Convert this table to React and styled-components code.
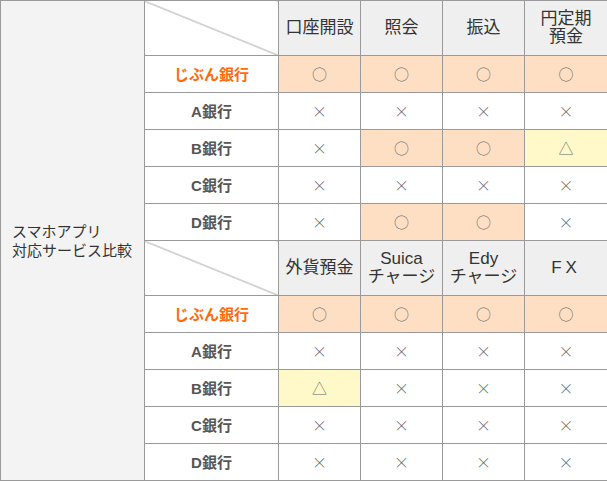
import React from "react";
import styled, { createGlobalStyle } from "styled-components";

const Global = createGlobalStyle`
  body {
    margin: 0;
    background: #fff;
    font-family: "Liberation Sans", "Noto Sans CJK JP", sans-serif;
  }
`;

const Table = styled.table`
  border-collapse: collapse;
  table-layout: fixed;
  width: 607px;
  color: #333;
`;

const Col = styled.col`
  width: ${(p) => p.$w}px;
`;

const Cell = styled.td`
  border: 1px solid #9a9a9a;
  padding: 0;
  text-align: center;
  vertical-align: middle;
`;

const Title = styled(Cell)`
  background: #f3f3f3;
  text-align: left;
  padding-left: 11px;
  font-size: 15px;
  line-height: 19px;
  color: #333;
`;

const Corner = styled(Cell)`
  height: 54px;
  background: linear-gradient(
    to top right,
    transparent calc(50% - 0.8px),
    #9a9a9a 50%,
    transparent calc(50% + 0.8px)
  );
`;

const Head = styled(Cell)`
  background: #efefef;
  font-size: 17px;
  line-height: 18px;
  color: #333;
  letter-spacing: ${(p) => (p.$wide ? "4px" : "0")};
`;

const Bank = styled(Cell)`
  height: 34px;
  font-size: 15px;
  font-weight: bold;
  padding-bottom: 2px;
  color: ${(p) => (p.$own ? "#ff6a0d" : "#555")};
`;

const Mark = styled(Cell)`
  font-family: "Noto Sans CJK JP", sans-serif;
  font-size: 15px;
  font-weight: 300;
  color: #666;
  padding-bottom: 2px;
  background: ${(p) =>
    p.$tone === "o" ? "#fedfc3" : p.$tone === "y" ? "#fff9c9" : "#fff"};
`;

const widths = [144, 134, 82, 82, 82, 83];

const sections = [
  {
    heads: [["口座開設"], ["照会"], ["振込"], ["円定期", "預金"]],
    rows: [
      ["じぶん銀行", "oooo"],
      ["A銀行", "xxxx"],
      ["B銀行", "xoot"],
      ["C銀行", "xxxx"],
      ["D銀行", "xoox"],
    ],
  },
  {
    heads: [["外貨預金"], ["Suica", "チャージ"], ["Edy", "チャージ"], ["FX"]],
    rows: [
      ["じぶん銀行", "oooo"],
      ["A銀行", "xxxx"],
      ["B銀行", "txxx"],
      ["C銀行", "xxxx"],
      ["D銀行", "xxxx"],
    ],
  },
];

const glyph = { o: "○", x: "×", t: "△" };

function Row({ name, marks }) {
  const own = name === "じぶん銀行";
  return (
    <>
      <Bank $own={own}>{name}</Bank>
      {marks.split("").map((m, i) => (
        <Mark key={i} $tone={m === "o" ? "o" : m === "t" ? "y" : ""}>
          {glyph[m]}
        </Mark>
      ))}
    </>
  );
}

export default function App() {
  return (
    <>
      <Global />
      <Table>
        <colgroup>
          {widths.map((w, i) => (
            <Col key={i} $w={w} />
          ))}
        </colgroup>
        <tbody>
          {sections.map((s, si) => (
            <React.Fragment key={si}>
              <tr>
                {si === 0 && (
                  <Title rowSpan={12}>
                    スマホアプリ
                    <br />
                    対応サービス比較
                  </Title>
                )}
                <Corner />
                {s.heads.map((h, i) => (
                  <Head key={i} $wide={h[0] === "FX"}>
                    {h.map((line, j) => (
                      <React.Fragment key={j}>
                        {j > 0 && <br />}
                        {line}
                      </React.Fragment>
                    ))}
                  </Head>
                ))}
              </tr>
              {s.rows.map((r) => (
                <tr key={r[0]}>
                  <Row name={r[0]} marks={r[1]} />
                </tr>
              ))}
            </React.Fragment>
          ))}
        </tbody>
      </Table>
    </>
  );
}
